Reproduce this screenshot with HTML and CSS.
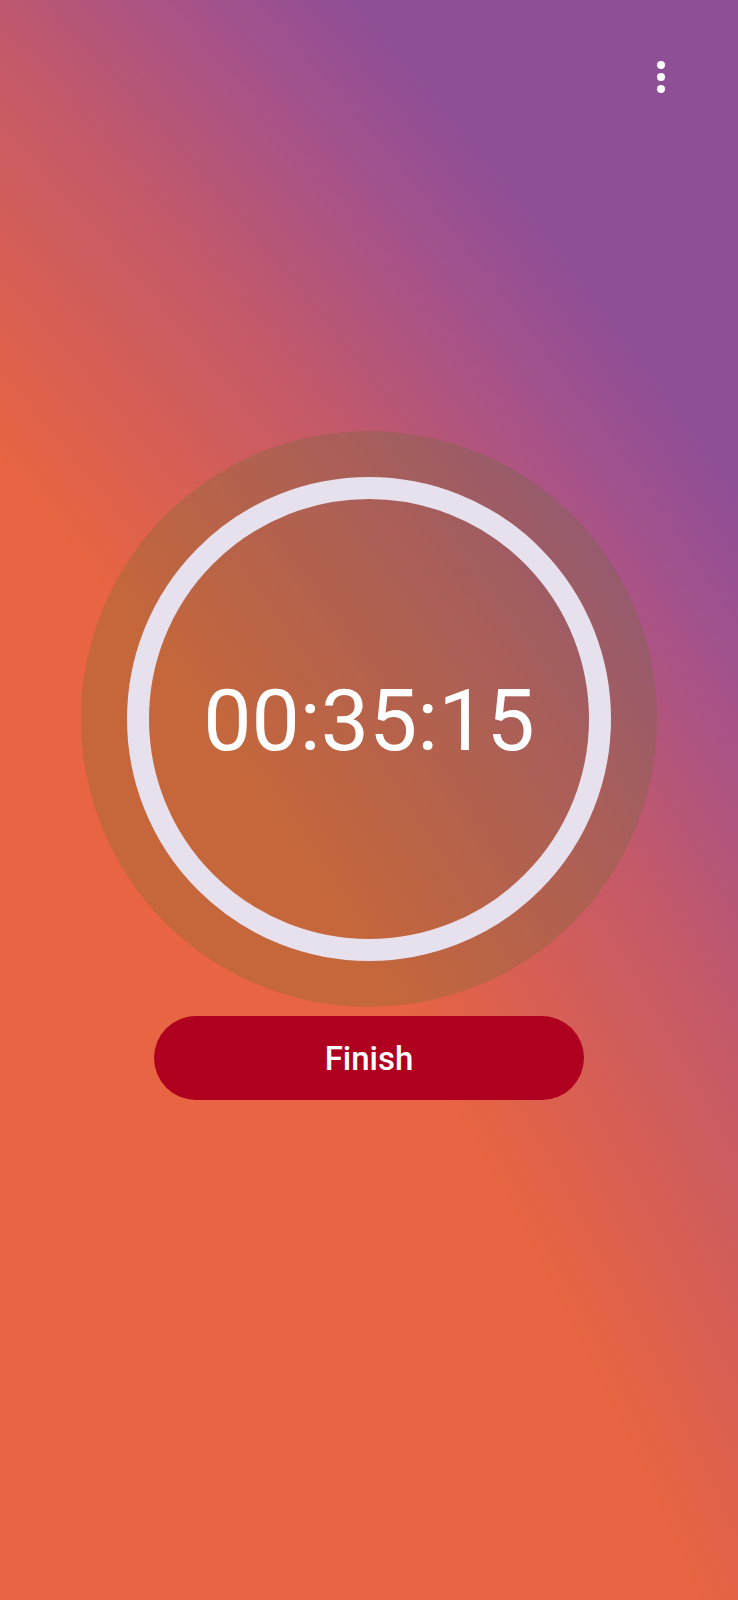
FILE: index.html
```html
<!DOCTYPE html>
<html lang="en">
<head>
<meta charset="utf-8">
<title>Timer</title>
<link rel="stylesheet" href="styles.css">
</head>
<body>
<main class="screen">
  <header class="topbar">
    <button class="menu-btn" aria-label="More options">
      <svg viewBox="0 0 24 24" width="48" height="48" aria-hidden="true">
        <circle cx="12" cy="6" r="2" fill="#ffffff"/>
        <circle cx="12" cy="12" r="2" fill="#ffffff"/>
        <circle cx="12" cy="18" r="2" fill="#ffffff"/>
      </svg>
    </button>
  </header>
  <section class="timer">
    <div class="disc">
      <div class="ring">
        <span class="time">00:35:15</span>
      </div>
    </div>
    <button class="finish">Finish</button>
  </section>
</main>
</body>
</html>
```

FILE: styles.css
```css
html, body {
  margin: 0;
  padding: 0;
}

body {
  width: 738px;
  height: 1600px;
  overflow: hidden;
  font-family: Roboto, "Noto Sans", "Liberation Sans", sans-serif;
}

.screen {
  width: 738px;
  height: 1600px;
  display: flex;
  flex-direction: column;
  background: radial-gradient(circle at -3443px 3359px,
      #e86442 4500px,
      #c3596a 4780px,
      #a5528a 4950px,
      #8f4f96 5070px);
}

.topbar {
  display: flex;
  justify-content: flex-end;
  padding: 53px 53px 0 0;
}

.menu-btn {
  width: 48px;
  height: 48px;
  padding: 0;
  border: 0;
  background: none;
  display: flex;
}

.timer {
  display: flex;
  flex-direction: column;
  align-items: center;
  margin-top: 330px;
}

.disc {
  width: 576px;
  height: 576px;
  border-radius: 50%;
  background: rgba(90, 110, 40, 0.25);
  display: flex;
  align-items: center;
  justify-content: center;
}

.ring {
  width: 484px;
  height: 484px;
  box-sizing: border-box;
  border: 22px solid #e7e1ee;
  border-radius: 50%;
  display: flex;
  align-items: center;
  justify-content: center;
}

.time {
  color: #ffffff;
  font-size: 86px;
  font-weight: 400;
  line-height: 1;
  padding-top: 3px;
}

.finish {
  margin-top: 9px;
  width: 430px;
  height: 84px;
  border: 0;
  border-radius: 42px;
  background: #b0001f;
  color: #ffffff;
  font-family: Roboto, "Noto Sans", "Liberation Sans", sans-serif;
  font-size: 33px;
  font-weight: 500;
}
```
